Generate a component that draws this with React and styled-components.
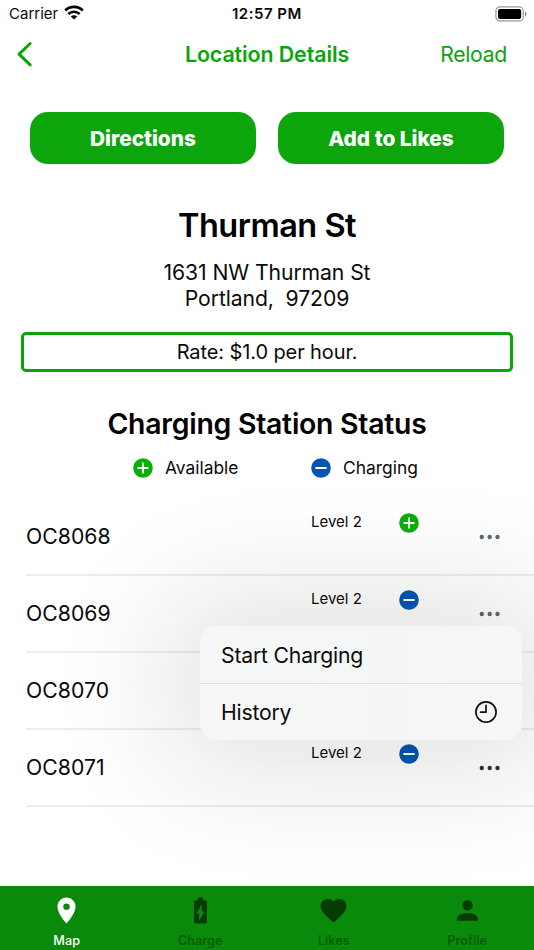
import styled, { createGlobalStyle } from "styled-components"
import { MdLocationOn, MdBatteryChargingFull, MdFavorite, MdPerson } from "react-icons/md"

const stations = [
    { id: "OC8068", level: "Level 2", status: "available" },
    { id: "OC8069", level: "Level 2", status: "charging" },
    { id: "OC8070" },
    { id: "OC8071", level: "Level 2", status: "charging", dark: true },
]

const tabs = [
    { name: "Map", icon: MdLocationOn, active: true },
    { name: "Charge", icon: MdBatteryChargingFull },
    { name: "Likes", icon: MdFavorite },
    { name: "Profile", icon: MdPerson },
]

function StatusIcon({ status }) {
    return (
        <svg width="20" height="20" viewBox="0 0 20 20">
            <circle cx="10" cy="10" r="9.8" fill={status === "available" ? "#06b006" : "#0355b3"} />
            <path
                d={status === "available" ? "M5.2 10H14.8M10 5.2V14.8" : "M5 10H15"}
                stroke="#fff"
                strokeWidth="1.8"
                strokeLinecap="round"
            />
        </svg>
    )
}

function Wifi() {
    return (
        <svg width="20" height="15" viewBox="0 0 20 15">
            <path d="M1.2 5.6C6.1.6 13.9.6 18.8 5.6" fill="none" stroke="#000" strokeWidth="2.8" />
            <path d="M4.3 9C7.5 5.9 12.5 5.9 15.7 9" fill="none" stroke="#000" strokeWidth="2.6" />
            <path d="M10 14.5L6.8 11.4C8.6 9.8 11.4 9.8 13.2 11.4Z" />
        </svg>
    )
}

function Battery() {
    return (
        <svg width="33" height="16" viewBox="0 0 33 16">
            <rect x=".9" y=".9" width="27.4" height="14" rx="4" fill="none" stroke="#999" strokeWidth="1.2" />
            <rect x="3" y="3" width="23.2" height="10" rx="2" />
            <path d="M30 5.4C32 6.2 32 9.6 30 10.4Z" fill="#888" />
        </svg>
    )
}

function Dots({ dark }) {
    return (
        <svg width="22" height="6" viewBox="0 0 22 6" fill={dark ? "#2c353c" : "#5a6977"}>
            <circle cx="2.8" cy="3" r="2.2" />
            <circle cx="10.7" cy="3" r="2.2" />
            <circle cx="18.5" cy="3" r="2.2" />
        </svg>
    )
}

export default function App() {
    return (
        <Screen>
            <Global />
            <StatusBar>
                <Carrier>Carrier <Wifi /></Carrier>
                <Time>12:57 PM</Time>
                <Battery />
            </StatusBar>

            <NavBar>
                <svg width="18" height="28" viewBox="0 0 18 28">
                    <path d="M15.2 3.5L4 14.2L15.2 24.9" fill="none" stroke="#0aa50a" strokeWidth="3" strokeLinecap="round" strokeLinejoin="round" />
                </svg>
                <NavTitle>Location Details</NavTitle>
                <Reload>Reload</Reload>
            </NavBar>

            <Actions>
                <ActionButton>Directions</ActionButton>
                <ActionButton>Add to Likes</ActionButton>
            </Actions>

            <PlaceName>Thurman St</PlaceName>
            <Address>{"1631 NW Thurman St\nPortland,  97209"}</Address>
            <Rate>Rate: $1.0 per hour.</Rate>

            <Heading>Charging Station Status</Heading>
            <Legend>
                <LegendItem><StatusIcon status="available" /><span>Available</span></LegendItem>
                <LegendItem><StatusIcon status="charging" /><span>Charging</span></LegendItem>
            </Legend>

            <List>
                {stations.map((s) => (
                    <Row key={s.id}>
                        <Code>{s.id}</Code>
                        {s.level && (
                            <>
                                <Level>{s.level}</Level>
                                <IconCell><StatusIcon status={s.status} /></IconCell>
                                <More><Dots dark={s.dark} /></More>
                            </>
                        )}
                    </Row>
                ))}
                <Menu>
                    <MenuItem>Start Charging</MenuItem>
                    <MenuItem>
                        History
                        <svg width="24" height="24" viewBox="0 0 24 24" fill="none" stroke="#111" strokeWidth="1.7" strokeLinecap="round" strokeLinejoin="round">
                            <circle cx="12" cy="12" r="10.1" />
                            <path d="M12 5.3V12.2H6.6" />
                        </svg>
                    </MenuItem>
                </Menu>
            </List>

            <TabBar>
                {tabs.map(({ name, icon: Icon, active }) => (
                    <Tab key={name} $active={active}>
                        <Icon size={31} />
                        <TabLabel $active={active}>{name}</TabLabel>
                    </Tab>
                ))}
            </TabBar>
        </Screen>
    )
}

const Global = createGlobalStyle`
body {
    margin: 0;
    background: #fff;
}
* {
    box-sizing: border-box;
}
svg {
    display: block;
    flex-shrink: 0;
}
`

const Screen = styled.div`
width: 534px;
height: 950px;
display: flex;
flex-direction: column;
overflow: hidden;
background: #fff;
color: #0a0a0a;
font-family: Inter, "Liberation Sans", sans-serif;
white-space: nowrap;
`

const StatusBar = styled.div`
height: 27px;
padding: 0 6px 0 9px;
display: grid;
grid-template-columns: 223px 1fr auto;
align-items: center;
`

const Carrier = styled.div`
display: flex;
align-items: center;
gap: 6px;
font-size: 15px;

svg {
    margin-top: -2px;
}
`

const Time = styled.div`
font-size: 15px;
font-weight: 600;
letter-spacing: 0.5px;
`

const NavBar = styled.div`
height: 54px;
padding: 0 27px;
display: grid;
grid-template-columns: 1fr auto 1fr;
align-items: center;
color: #0aa50a;

> svg {
    margin-left: -12px;
}
`

const NavTitle = styled.div`
font-size: 21.4px;
font-weight: 600;
letter-spacing: -0.1px;
`

const Reload = styled.div`
font-size: 21.2px;
letter-spacing: -0.3px;
text-align: right;
`

const Actions = styled.div`
margin: 31px 30px 0;
display: grid;
grid-template-columns: 1fr 1fr;
gap: 22px;
`

const ActionButton = styled.button`
height: 52px;
border: 0;
border-radius: 18px;
padding: 0;
background: #0ca50c;
color: #fff;
font-family: inherit;
font-size: 20.8px;
font-weight: 800;
`

const PlaceName = styled.h1`
margin: 41px 0 0;
line-height: 42px;
font-size: 32.5px;
font-weight: 560;
letter-spacing: -0.5px;
text-align: center;
color: #000;
`

const Address = styled.div`
margin-top: 12px;
line-height: 26px;
font-size: 21.2px;
letter-spacing: -0.1px;
text-align: center;
white-space: pre;
`

const Rate = styled.div`
margin: 21px 21px 0;
height: 40px;
border: 3px solid #0aa50a;
border-radius: 5px;
display: flex;
align-items: center;
justify-content: center;
font-size: 20px;
letter-spacing: -0.1px;
`

const Heading = styled.h2`
margin: 32px 0 0;
line-height: 40px;
font-size: 28.4px;
font-weight: 600;
letter-spacing: -0.25px;
text-align: center;
color: #000;
`

const Legend = styled.div`
height: 48px;
padding-left: 133px;
display: grid;
grid-template-columns: 178px auto;
align-items: center;
`

const LegendItem = styled.div`
display: flex;
align-items: center;
gap: 12px;
font-size: 17.4px;

span {
    margin-top: -1px;
}
`

const List = styled.div`
position: relative;
margin-top: 7px;
padding-left: 26px;
flex: 1;
`

const Row = styled.div`
height: 77px;
border-bottom: 2px solid #ededed;
display: grid;
grid-template-columns: 285px 87.5px 80px auto;
`

const Code = styled.div`
line-height: 75px;
font-size: 21.2px;
letter-spacing: 0.05px;
`

const Level = styled.div`
padding-top: 13px;
line-height: 20px;
font-size: 15px;
`

const IconCell = styled.div`
padding-top: 14px;
`

const More = styled.div`
padding-top: 35px;
`

const Menu = styled.div`
position: absolute;
left: 200px;
top: 127px;
width: 322px;
border-radius: 17px;
background: linear-gradient(90deg, #f6f6f6, #f4f6f6 60%, #f6f6f6);
box-shadow: 0 0 120px 32px rgba(20, 20, 0, 0.125);
`

const MenuItem = styled.div`
height: 57px;
padding: 0 24px 0 21px;
display: flex;
align-items: center;
justify-content: space-between;
font-size: 21.2px;
letter-spacing: -0.2px;

& + & {
    height: 57px;
    border-top: 1px solid #dcdddd;
}
`

const TabBar = styled.div`
position: relative;
height: 64px;
display: grid;
grid-template-columns: repeat(4, 1fr);
background: #0a8a0a;
`

const Tab = styled.div`
padding-top: 9px;
display: flex;
flex-direction: column;
align-items: center;
color: ${props => props.$active ? "#fff" : "#053c05"};
`

const TabLabel = styled.div`
margin-top: 6px;
line-height: 17px;
font-size: 12.7px;
font-weight: 500;
letter-spacing: 0.1px;
color: ${props => props.$active ? "#fff" : "#075507"};
`
